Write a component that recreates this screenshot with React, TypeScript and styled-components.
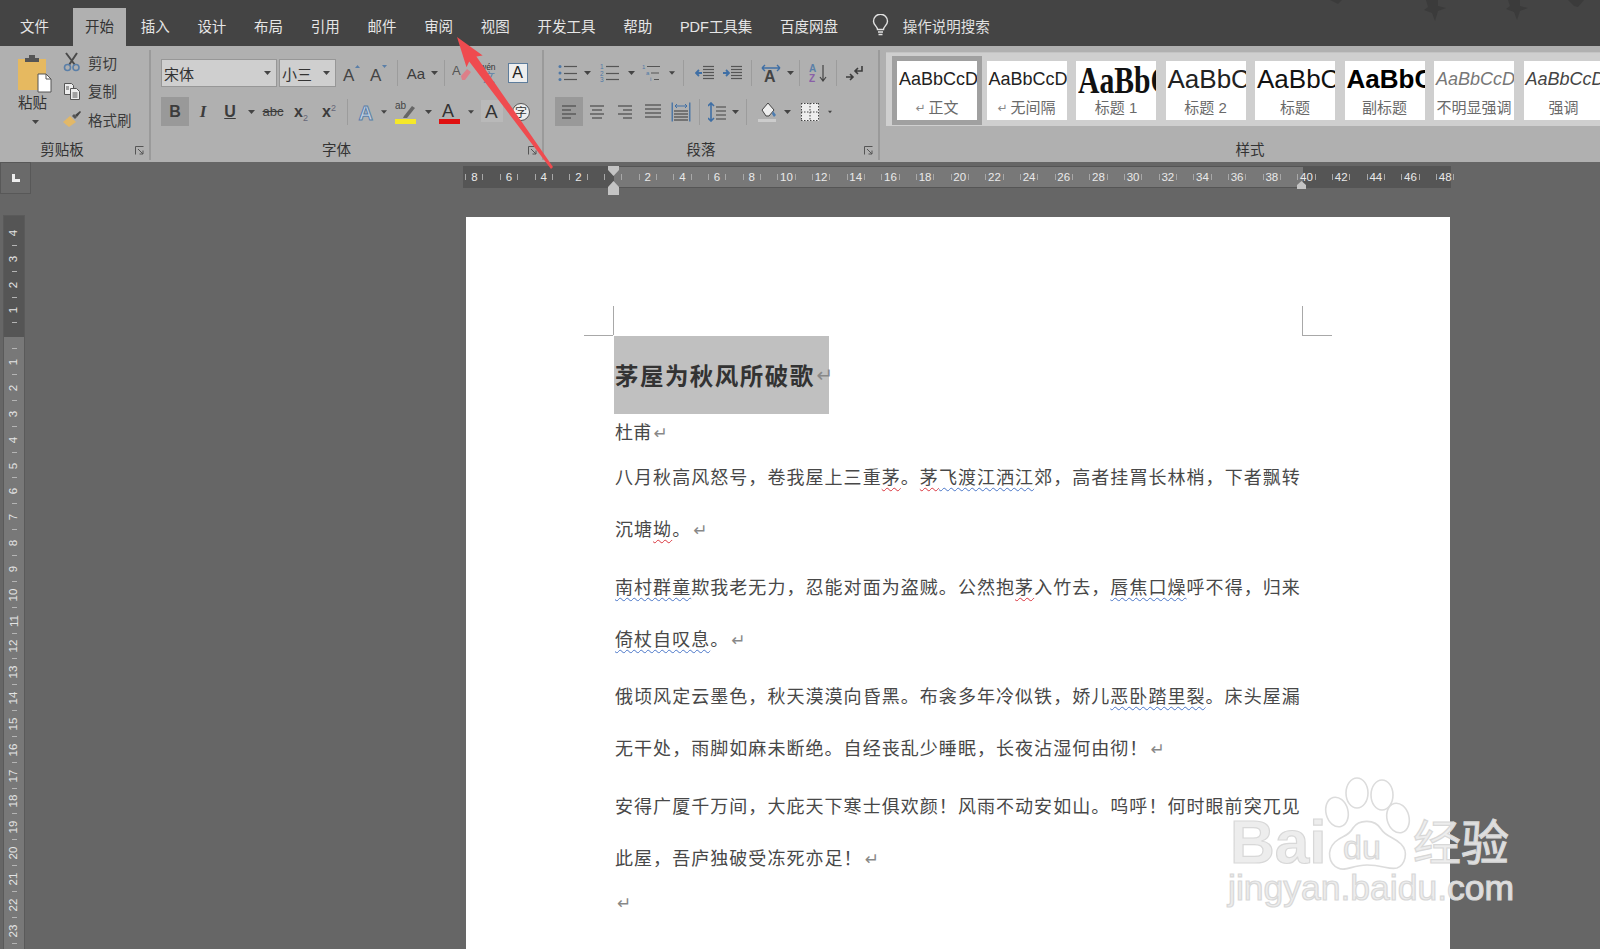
import React from "react";
import styled, { createGlobalStyle } from "styled-components";

const Global = createGlobalStyle`
  html, body { margin: 0; padding: 0; background: #666; }
  body { width: 1600px; height: 949px; overflow: hidden; font-family: "Noto Sans CJK SC", "Liberation Sans", sans-serif; }
`;
const UI = `"Liberation Sans", "Noto Sans CJK SC", sans-serif`;

const Shell = styled.div`position: relative; width: 1600px; height: 949px; overflow: hidden; display: flex; flex-direction: column; background: #666;`;
const TitleBar = styled.div`position: relative; height: 46px; flex: none; background: #444; display: flex; align-items: flex-end; padding-left: 8px; box-sizing: border-box;`;
const Tab = styled.div<{ $active?: boolean; $after?: number }>`
  height: 38px; padding: 0 12px; margin-right: ${p => p.$after ?? 3.7}px; display: flex; align-items: center; padding-bottom: 3px; box-sizing: border-box;
  font: 14.5px ${UI}; color: ${p => p.$active ? "#333" : "#e6e6e6"}; background: ${p => p.$active ? "#b0b0b0" : "transparent"};
`;
const Search = styled.div`display: flex; align-items: center; gap: 14px; margin-left: 18px; height: 38px; padding-bottom: 3px; box-sizing: border-box; font: 14.5px ${UI}; color: #e0e0e0;`;
const Birds = styled.svg`position: absolute; right: 0; top: 0;`;

const Ribbon = styled.div`height: 116px; flex: none; background: #b0b0b0; display: flex; overflow: hidden;`;
const Group = styled.section<{ $w: number; $last?: boolean }>`
  width: ${p => p.$w}px; flex: none; box-sizing: border-box; margin: 4px 0 2px; display: flex; flex-direction: column;
  border-right: ${p => p.$last ? "none" : "2px solid #9a9a9a"};
`;
const Body = styled.div`flex: 1; min-height: 0; padding-top: 9px; box-sizing: border-box;`;
const ClipBody = styled(Body)`display: flex; padding-top: 0;`;
const PasteCol = styled.div`width: 62px; padding-top: 5px; padding-left: 18px; box-sizing: border-box; display: flex; flex-direction: column; align-items: flex-start;`;
const PasteLabel = styled.div`font: 14.5px ${UI}; color: #333; line-height: 20px;`;
const PasteCaret = styled.div`display: flex; margin: 7px 0 0 14px;`;
const SmallCol = styled.div`display: flex; flex-direction: column; margin-top: -2px;`;
const SmallItem = styled.div`height: 28.5px; display: flex; align-items: center; gap: 6px; font: 14.5px ${UI}; color: #3a3a3a;`;
const SmallIcon = styled.div`width: 20px; display: flex; justify-content: center;`;
const LabelRow = styled.div<{ $pad?: number }>`height: 20px; flex: none; margin-top: auto; display: flex; align-items: center; padding-left: ${p => p.$pad ?? 0}px;`;
const GroupLabel = styled.div`flex: 1; text-align: center; font: 14.5px ${UI}; color: #333; line-height: 20px;`;
const Launcher = styled.div<{ $w: number }>`width: ${p => p.$w}px; flex: none; display: flex; justify-content: flex-end; padding-right: 5px; box-sizing: border-box;`;

const Rows = styled.div<{ $left: number }>`display: flex; flex-direction: column; gap: 10px; padding-left: ${p => p.$left}px;`;
const Row = styled.div<{ $h: number }>`display: flex; align-items: center; height: ${p => p.$h}px;`;
const Select = styled.div<{ $w: number }>`
  width: ${p => p.$w}px; height: 28px; box-sizing: border-box; flex: none; background: #cfcfcf; border: 1px solid #979797; margin-right: 2px;
  display: flex; align-items: center; justify-content: space-between; padding: 0 5px 0 2px; font: 15px ${UI}; color: #333;
`;
const Cell = styled.div<{ $w: number; $on?: boolean }>`
  width: ${p => p.$w}px; height: 29px; flex: none; display: flex; align-items: center; justify-content: center;
  background: ${p => p.$on ? "#999" : "transparent"};
`;
const Sep = styled.div<{ $w: number }>`width: ${p => p.$w}px; height: 26px; flex: none; display: flex; justify-content: center; &::after { content: ""; width: 1px; background: #9c9c9c; }`;
const Glyph = styled.span<{ $f?: string; $s: number; $b?: boolean; $i?: boolean; $c?: string; $u?: boolean; $st?: boolean }>`
  font-family: ${p => p.$f ?? UI}; font-size: ${p => p.$s}px; font-weight: ${p => p.$b ? 700 : 400}; font-style: ${p => p.$i ? "italic" : "normal"};
  color: ${p => p.$c ?? "#3c3c3c"}; line-height: 1; text-decoration: ${p => p.$u ? "underline" : p.$st ? "line-through" : "none"};
  & sup, & sub { font-size: 9px; font-weight: 400; color: #667; line-height: 0; }
`;
const BoxA = styled.div`width: 20px; height: 20px; box-sizing: border-box; background: #eee; border: 1px solid #5e7d9c; display: flex; align-items: center; justify-content: center; font: 16px ${UI}; color: #222;`;

const Gallery = styled.div`margin: 2px 0 0 6px; height: 74px; width: 760px; flex: none; box-sizing: border-box; background: #cfcfcf; display: flex; gap: 9.5px; padding: 8px 0 0 11px; border-top: 1px solid #c4c4c4;`;
const Card = styled.div<{ $sel?: boolean }>`
  width: 80px; height: 59px; flex: none; background: #fff; display: flex; flex-direction: column; align-items: center; overflow: hidden;
  outline: ${p => p.$sel ? "5px solid #a0a0a0" : "none"};
`;
const Sample = styled.div<{ $f?: string; $s: number; $b?: boolean; $i?: boolean; $c?: string; $sx?: number }>`
  height: 37px; width: 80px; flex: none; overflow: hidden; white-space: nowrap; display: flex; align-items: center; padding-left: 2px; box-sizing: border-box;
  font-family: ${p => p.$f ?? UI}; font-size: ${p => p.$s}px; font-weight: ${p => p.$b ? 700 : 400}; font-style: ${p => p.$i ? "italic" : "normal"}; color: ${p => p.$c ?? "#222"};
  & > span { display: block; transform-origin: left center; transform: scaleX(${p => p.$sx ?? 1}); }
`;
const CardLabel = styled.div`font: 15px ${UI}; color: #6a6a6a; line-height: 20px; display: flex; align-items: center; gap: 3px; white-space: nowrap;`;

const Workspace = styled.div`flex: 1; min-height: 0; display: flex; position: relative; background: #666;`;
const LeftRail = styled.div`width: 466px; flex: none; display: flex; flex-direction: column;`;
const TabSel = styled.div`width: 31px; height: 32px; box-sizing: border-box; background: #6a6a6a; border: 1px solid #585858; display: flex; align-items: center; justify-content: center; flex: none;`;
const VRuler = styled.div`margin: 21px 0 0 2.5px; width: 22px; flex: 1; padding-top: 4px; box-sizing: border-box; overflow: hidden; background: linear-gradient(#555 0 121.5px, #787878 121.5px); border: 1px solid #5a5a5a; border-bottom: none; color: #e4e4e4; font: 400 11.5px ${UI};`;
const VCell = styled.div`height: 25.85px; position: relative; display: flex; align-items: center; justify-content: center; & > span { transform: rotate(-90deg); }
  &::after { content: ""; position: absolute; left: 8px; bottom: 0; width: 5px; height: 1px; background: #b4b4b4; }`;
const MainCol = styled.div`display: flex; flex-direction: column; width: 988px; flex: none;`;
const HRuler = styled.div`margin: 4px 0 0 -3px; width: 988px; height: 22px; flex: none; box-sizing: border-box; display: flex; overflow: visible; border: 1px solid #555;
  background: linear-gradient(90deg, #555 0 150px, #787878 150px 839px, #555 839px); color: #eaeaea; font: 400 11.5px ${UI};`;
const HTrack = styled.div`display: flex; margin-left: -7px; height: 100%;`;
const HCell = styled.div`width: 34.68px; flex: none; display: flex; align-items: center; justify-content: center;`;
const HNum = styled.span`width: 16.3px; text-align: center;`;
const HTick = styled.i`width: 1px; height: 6px; background: #a8a8a8;`;
const Page = styled.div`position: relative; margin-top: 29px; width: 984px; flex: 1; background: #fff; box-sizing: border-box; padding: 119px 148px 0 148px; font-family: "Noto Sans CJK SC", sans-serif; color: #484848;`;
const Crop = styled.i<{ $x: number; $y: number; $w: number; $h: number }>`position: absolute; left: ${p => p.$x}px; top: ${p => p.$y}px; width: ${p => p.$w}px; height: ${p => p.$h}px; background: #a8a8a8;`;
const Title = styled.div`width: 214.5px; height: 78px; background: #c0c0c0; display: flex; align-items: center; padding-left: 1px; box-sizing: border-box; font-size: 23.5px; font-weight: 700; letter-spacing: 1.45px; color: #333; white-space: nowrap;`;
const Author = styled.div`height: 36px; line-height: 35px; font-size: 18px; padding-left: 1px; white-space: nowrap; letter-spacing: .3px;`;
const Para = styled.p`margin: 0 0 5.5px; font-size: 18px; line-height: 52px; letter-spacing: 1.05px; padding-left: 1px; width: 692px; white-space: normal;`;
const LastLine = styled.div`height: 26px; line-height: 26px; padding-left: 1px; font-size: 18px;`;
const Ret = styled.span<{ $s?: number }>`font-family: "DejaVu Sans", sans-serif; font-size: ${p => p.$s ?? 17}px; line-height: 1; font-weight: 400; color: #888; letter-spacing: 0; margin-left: 2px;`;
const CardRet = styled(Ret)`font-size: 12px; margin: 0;`;
const Wavy = styled.span<{ $c: string }>`text-decoration: underline wavy ${p => p.$c} 1px; text-underline-offset: 3px;`;

const Overlay = styled.svg`position: absolute; left: 0; top: 0; pointer-events: none;`;
const Mark = styled.div`position: absolute; left: 1226px; top: 775px; width: 300px; height: 150px; pointer-events: none;`;
const MarkPaw = styled.svg`position: absolute; left: 0; top: 0;`;
const MarkText = styled.span<{ $x: number; $y: number; $s: number; $b?: boolean }>`
  position: absolute; left: ${p => p.$x}px; top: ${p => p.$y}px; font-family: "Liberation Sans", "Noto Sans CJK SC", sans-serif; font-size: ${p => p.$s}px; line-height: 1; white-space: nowrap;
  color: rgba(236,236,236,.92); -webkit-text-stroke: 1.2px #d8d8d8; font-weight: ${p => p.$b ? 700 : 400};
`;

const Caret = ({ c = "#444" }: { c?: string }) => <svg width="7" height="4" viewBox="0 0 7 4"><path d="M0 0h7L3.5 4z" fill={c} /></svg>;

const Paste = () => (
  <svg width="35" height="38" viewBox="0 0 35 38">
    <rect x="0" y="4" width="28" height="31" fill="#e6b960" />
    <rect x="7" y="3" width="14" height="4" fill="#555" />
    <rect x="11" y="0" width="6" height="4" fill="#555" />
    <path d="M20 19h8l5 5v13H20z" fill="#fff" stroke="#555" />
    <path d="M28 19v5h5" fill="none" stroke="#555" />
  </svg>
);
const Scissors = () => (
  <svg width="18" height="20" viewBox="0 0 18 20" fill="none">
    <path d="M3 1l9 12M14 1L6 13" stroke="#4a4a4a" strokeWidth="2" />
    <circle cx="4.500" cy="15.500" r="3" stroke="#5a7fa8" strokeWidth="1.600" />
    <circle cx="13" cy="15.500" r="3" stroke="#5a7fa8" strokeWidth="1.600" />
  </svg>
);
const Copy = () => (
  <svg width="18" height="18" viewBox="0 0 18 18" fill="#eee" stroke="#555">
    <path d="M1.500 1.500h7l2 2v9h-9z" />
    <path d="M7.500 6.500h6l3 3v8h-9z" />
    <path d="M9.500 11h5M9.500 13h5M9.500 15h5M3 5h3M3 7h3" fill="none" />
  </svg>
);
const Brush = () => (
  <svg width="20" height="18" viewBox="0 0 20 18">
    <path d="M1 12l7-6 6 6-7 5z" fill="#e2b868" />
    <path d="M10 6l2-2 3 3-2 2z" fill="#555" />
    <path d="M13 5l5-4 1 1-4 5z" fill="#444" />
  </svg>
);
const LauncherIcon = () => (
  <svg width="9" height="9" viewBox="0 0 9 9" fill="none" stroke="#555">
    <path d="M.5 8.500v-8h8" /><path d="M3 3l5 5M8 4.500V8H4.500" />
  </svg>
);
const Bulb = () => (
  <svg width="17" height="23" viewBox="0 0 17 23" fill="none" stroke="#e2e2e2" strokeWidth="1.400">
    <path d="M5.500 15.500c0-3-4-4.500-4-8.300a7 7 0 0 1 14 0c0 3.800-4 5.300-4 8.300z" />
    <path d="M6 18h5M6.500 20.500h4" />
  </svg>
);
const GrowA = ({ up }: { up: boolean }) => (
  <svg width="20" height="18" viewBox="0 0 20 18">
    <text x="1" y="17" fontFamily="Liberation Sans" fontSize="17" fill="#444">A</text>
    <path d={up ? "M13 4l2.500-3 2.500 3z" : "M13 1h5l-2.500 3z"} fill="#5a7fa8" />
  </svg>
);
const Eraser = () => (
  <svg width="20" height="20" viewBox="0 0 20 20">
    <text x="0" y="12" fontFamily="Liberation Sans" fontSize="13" fill="#555">A</text>
    <path d="M9 13l6-7 4 3-6 8H10z" fill="#dd7f88" />
  </svg>
);
const Wen = () => (
  <svg width="20" height="21" viewBox="0 0 20 21">
    <text x="1" y="7" fontFamily="Liberation Sans" fontSize="8.500" fill="#333">wén</text>
    <text x="4" y="19" fontFamily="Noto Sans CJK SC" fontSize="12" fill="#5a7fa8">文</text>
  </svg>
);
const ColorA = ({ c }: { c: string }) => (
  <svg width="22" height="24" viewBox="0 0 22 24">
    <text x="3" y="17" fontFamily="Liberation Sans" fontSize="18" fill="#333">A</text>
    <rect x="0" y="19" width="21" height="5" fill={c} />
  </svg>
);
const Highlight = () => (
  <svg width="22" height="24" viewBox="0 0 22 24">
    <text x="0" y="9" fontFamily="Liberation Sans" fontSize="10" fill="#444">ab</text>
    <path d="M9 16l8-10 3 2-8 10H8z" fill="#666" />
    <rect x="0" y="19" width="21" height="5" fill="#f5e829" />
  </svg>
);
const EffectA = () => (
  <svg width="20" height="22" viewBox="0 0 20 22">
    <text x="2.500" y="19" fontFamily="Liberation Sans" fontSize="20" fontWeight="700" fill="#c3d2e4" stroke="#5a7fa8" strokeWidth="1">A</text>
  </svg>
);
const ShadedA = () => <svg width="22" height="24" viewBox="0 0 22 24"><rect width="22" height="22" fill="#b9b9b9" /><text x="4" y="18" fontFamily="Liberation Sans" fontSize="19" fill="#333">A</text></svg>;
const Phon = () => (
  <svg width="20" height="20" viewBox="0 0 20 20">
    <circle cx="10" cy="10" r="8.500" fill="#eee" stroke="#555" />
    <text x="4" y="15" fontFamily="Noto Sans CJK SC" fontSize="12" fill="#333">字</text>
  </svg>
);
const lines = (x: number, x2: number, ys: number[], c = "#555") => ys.map(y => <path key={y} d={`M${x} ${y}H${x2}`} stroke={c} strokeWidth="1.200" />);
const Bullets = () => (
  <svg width="20" height="18" viewBox="0 0 20 18">
    {[2.5, 9, 15.5].map(y => <circle key={y} cx="2" cy={y} r="1.500" fill="#4f78a6" />)}
    {lines(6, 19, [2.5, 9.5, 15.5])}
  </svg>
);
const Numbers = () => (
  <svg width="20" height="18" viewBox="0 0 20 18">
    {["1", "2", "3"].map((t, i) => <text key={t} x="0" y={5 + i * 6.5} fontFamily="Liberation Sans" fontSize="6.500" fill="#4f78a6">{t}</text>)}
    {lines(6, 19, [2.5, 9.5, 15.5])}
  </svg>
);
const Multi = () => (
  <svg width="20" height="18" viewBox="0 0 20 18">
    <text x="0" y="5" fontFamily="Liberation Sans" fontSize="6" fill="#4f78a6">1</text>
    <text x="4" y="11" fontFamily="Liberation Sans" fontSize="6" fill="#4f78a6">a</text>
    <text x="8" y="17" fontFamily="Liberation Sans" fontSize="6" fill="#4f78a6">i</text>
    <path d="M5 2.500h13M9 9h8M12 15.500h5" stroke="#555" strokeWidth="1.200" />
  </svg>
);
const Indent = ({ rev }: { rev?: boolean }) => (
  <svg width="20" height="16" viewBox="0 0 20 16">
    {lines(8, 19, [1.5, 4.5, 7.5, 10.5, 13.5])}
    <path d={rev ? "M0 8h5M3 5l3 3-3 3" : "M7 8H2M4 5L1 8l3 3"} stroke="#3f6fa5" strokeWidth="1.800" fill="none" />
  </svg>
);
const TextDir = () => (
  <svg width="20" height="18" viewBox="0 0 20 18">
    <text x="3" y="18" fontFamily="Liberation Sans" fontWeight="700" fontSize="16" fill="#444">A</text>
    <path d="M1 4h18M1 4l3-3M1 4l3 3M19 4l-3-3M19 4l-3 3" stroke="#3f6fa5" strokeWidth="1.400" fill="none" />
  </svg>
);
const Sort = () => (
  <svg width="20" height="20" viewBox="0 0 20 20">
    <text x="0" y="9" fontFamily="Liberation Sans" fontSize="10" fontWeight="700" fill="#5a7fa8">A</text>
    <text x="0" y="19" fontFamily="Liberation Sans" fontSize="10" fontWeight="700" fill="#8a5fa8">Z</text>
    <path d="M14 2v15M11 14l3 4 3-4" stroke="#444" fill="none" strokeWidth="1.200" />
  </svg>
);
const Marks = () => (
  <svg width="18" height="16" viewBox="0 0 18 16" fill="none" stroke="#3c3c3c" strokeWidth="1.600">
    <path d="M17 1v5h-6M13 3l-3 3 3 3M1 12h6M5 9l3 3-3 3" />
  </svg>
);
const Align = ({ ys }: { ys: [number, number][] }) => (
  <svg width="16" height="14" viewBox="0 0 16 14">
    {ys.map(([a, b], i) => <path key={i} d={`M${a} ${i * 4 + 1}H${b}`} stroke="#4a4a4a" strokeWidth="1.200" />)}
  </svg>
);
const Justify = () => <svg width="18" height="15" viewBox="0 0 18 15">{lines(1, 17, [1, 5, 9, 13], "#4a4a4a")}</svg>;
const Distribute = () => (
  <svg width="20" height="20" viewBox="0 0 20 20">
    <rect x=".5" y=".5" width="1.500" height="19" fill="#4f78a6" />
    <rect x="18" y=".5" width="1.500" height="19" fill="#4f78a6" />
    <path d="M4 4h12M4 4l2-2M4 4l2 2M16 4l-2-2M16 4l-2 2" stroke="#3f6fa5" fill="none" />
    {lines(3, 17, [9, 12, 15, 18], "#4a4a4a")}
  </svg>
);
const LineSp = () => (
  <svg width="18" height="20" viewBox="0 0 18 20">
    <path d="M3 1v18M0 4l3-3 3 3M0 16l3 3 3-3" stroke="#3f6fa5" strokeWidth="1.600" fill="none" />
    {lines(8, 18, [5, 9, 13, 17])}
  </svg>
);
const Fill = () => (
  <svg width="20" height="22" viewBox="0 0 20 22">
    <path d="M4 9l6-7 6 7-5 6H8z" fill="#eee" stroke="#444" />
    <path d="M15 10l3 4-2 2-2-3z" fill="#4c7cb0" />
    <rect x="0" y="18" width="18" height="3" fill="#ccc" />
  </svg>
);
const Border = () => (
  <svg width="18" height="18" viewBox="0 0 18 18">
    <rect width="18" height="18" fill="#eee" />
    <path d="M0 .5h18M.5 0v18M0 17.500h18M17.500 0v18M9 0v18M0 9h18" stroke="#444" strokeDasharray="1.500 1.500" />
  </svg>
);

const tabs = ["插入", "设计", "布局", "引用", "邮件", "审阅", "视图", "开发工具", "帮助", "PDF工具集", "百度网盘"];
const hNums = [8, 6, 4, 2, 0, 2, 4, 6, 8, 10, 12, 14, 16, 18, 20, 22, 24, 26, 28, 30, 32, 34, 36, 38, 40, 42, 44, 46, 48];
const vNums = [4, 3, 2, 1, 0, ...Array.from({ length: 23 }, (_, i) => i + 1)];
const RED = "#d9363e";
const BLUE = "#4a76c8";

export default function App() {
  return (
    <Shell>
      <Global />
      <TitleBar>
        <Tab $after={12}>文件</Tab>
        <Tab $active $after={2.7}>开始</Tab>
        {tabs.map(t => <Tab key={t}>{t}</Tab>)}
        <Search><Bulb />操作说明搜索</Search>
        <Birds width="270" height="24" viewBox="0 0 270 24" fill="#3b3b3b">
          <path d="M0 0h12l-4 4zM96 0h12v6l8 2-8 3-3 10-3-8-8-3 4-3zM178 0h12v6l8 2-8 3-3 9-3-8-8-3 4-3zM238 0h16l-6 7-4-1z" />
        </Birds>
      </TitleBar>

      <Ribbon>
        <Group $w={151}>
          <ClipBody>
            <PasteCol>
              <Paste />
              <PasteLabel>粘贴</PasteLabel>
              <PasteCaret><Caret /></PasteCaret>
            </PasteCol>
            <SmallCol>
              <SmallItem><SmallIcon><Scissors /></SmallIcon>剪切</SmallItem>
              <SmallItem><SmallIcon><Copy /></SmallIcon>复制</SmallItem>
              <SmallItem><SmallIcon><Brush /></SmallIcon>格式刷</SmallItem>
            </SmallCol>
          </ClipBody>
          <LabelRow><GroupLabel>剪贴板</GroupLabel><Launcher $w={25}><LauncherIcon /></Launcher></LabelRow>
        </Group>

        <Group $w={393}>
          <Body>
            <Rows $left={10}>
              <Row $h={28}>
                <Select $w={116}>宋体<Caret /></Select>
                <Select $w={57}>小三<Caret /></Select>
                <Cell $w={27}><GrowA up /></Cell>
                <Cell $w={27}><GrowA up={false} /></Cell>
                <Sep $w={11} />
                <Cell $w={26}><Glyph $s={15}>Aa</Glyph></Cell>
                <Cell $w={10}><Caret /></Cell>
                <Sep $w={10} />
                <Cell $w={26}><Eraser /></Cell>
                <Cell $w={27}><Wen /></Cell>
                <Cell $w={31}><BoxA>A</BoxA></Cell>
              </Row>
              <Row $h={29}>
                <Cell $w={28} $on><Glyph $s={16} $b>B</Glyph></Cell>
                <Cell $w={28}><Glyph $f='"Liberation Serif", serif' $s={17} $b $i>I</Glyph></Cell>
                <Cell $w={26}><Glyph $s={16} $b $u>U</Glyph></Cell>
                <Cell $w={16}><Caret /></Cell>
                <Cell $w={28}><Glyph $s={13} $st>abc</Glyph></Cell>
                <Cell $w={28}><Glyph $s={16} $b>x<sub>2</sub></Glyph></Cell>
                <Cell $w={28}><Glyph $s={16} $b>x<sup>2</sup></Glyph></Cell>
                <Sep $w={8} />
                <Cell $w={30}><EffectA /></Cell>
                <Cell $w={6}><Caret /></Cell>
                <Cell $w={37}><Highlight /></Cell>
                <Cell $w={8}><Caret /></Cell>
                <Cell $w={36}><ColorA c="#e01010" /></Cell>
                <Cell $w={6}><Caret /></Cell>
                <Cell $w={36}><ShadedA /></Cell>
                <Cell $w={22}><Phon /></Cell>
              </Row>
            </Rows>
          </Body>
          <LabelRow><GroupLabel>字体</GroupLabel><Launcher $w={20}><LauncherIcon /></Launcher></LabelRow>
        </Group>

        <Group $w={336}>
          <Body>
            <Rows $left={11}>
              <Row $h={28}>
                <Cell $w={26}><Bullets /></Cell>
                <Cell $w={12}><Caret /></Cell>
                <Cell $w={34}><Numbers /></Cell>
                <Cell $w={8}><Caret /></Cell>
                <Cell $w={34}><Multi /></Cell>
                <Cell $w={6}><Caret /></Cell>
                <Sep $w={17} />
                <Cell $w={26}><Indent /></Cell>
                <Cell $w={30}><Indent rev /></Cell>
                <Sep $w={6} />
                <Cell $w={33}><TextDir /></Cell>
                <Cell $w={7}><Caret /></Cell>
                <Sep $w={10} />
                <Cell $w={30}><Sort /></Cell>
                <Sep $w={5} />
                <Cell $w={30}><Marks /></Cell>
              </Row>
              <Row $h={29}>
                <Cell $w={28} $on><Align ys={[[1, 15], [1, 10], [1, 15], [1, 10]]} /></Cell>
                <Cell $w={28}><Align ys={[[1, 15], [3, 13], [1, 15], [3, 13]]} /></Cell>
                <Cell $w={28}><Align ys={[[1, 15], [6, 15], [1, 15], [6, 15]]} /></Cell>
                <Cell $w={28}><Justify /></Cell>
                <Cell $w={28}><Distribute /></Cell>
                <Sep $w={8} />
                <Cell $w={28}><LineSp /></Cell>
                <Cell $w={8}><Caret /></Cell>
                <Sep $w={15} />
                <Cell $w={28}><Fill /></Cell>
                <Cell $w={10}><Caret /></Cell>
                <Cell $w={36}><Border /></Cell>
                <Cell $w={4}><Caret /></Cell>
              </Row>
            </Rows>
          </Body>
          <LabelRow><GroupLabel>段落</GroupLabel><Launcher $w={20}><LauncherIcon /></Launcher></LabelRow>
        </Group>

        <Group $w={720} $last>
          <Gallery>
            <Card $sel><Sample $s={18}><span>AaBbCcDc</span></Sample><CardLabel><CardRet>↵</CardRet>正文</CardLabel></Card>
            <Card><Sample $s={18}><span>AaBbCcDc</span></Sample><CardLabel><CardRet>↵</CardRet>无间隔</CardLabel></Card>
            <Card><Sample $f='"Liberation Serif", serif' $s={38} $c="#111" $b $sx={0.78}><span>AaBbC</span></Sample><CardLabel>标题 1</CardLabel></Card>
            <Card><Sample $s={26}><span>AaBbC</span></Sample><CardLabel>标题 2</CardLabel></Card>
            <Card><Sample $s={26} $c="#111"><span>AaBbC</span></Sample><CardLabel>标题</CardLabel></Card>
            <Card><Sample $s={26} $b $c="#000"><span>AaBbC</span></Sample><CardLabel>副标题</CardLabel></Card>
            <Card><Sample $s={18} $i $c="#777"><span>AaBbCcDc</span></Sample><CardLabel>不明显强调</CardLabel></Card>
            <Card><Sample $s={18} $i $c="#444"><span>AaBbCcDc</span></Sample><CardLabel>强调</CardLabel></Card>
          </Gallery>
          <LabelRow $pad={20}><GroupLabel>样式</GroupLabel></LabelRow>
        </Group>
      </Ribbon>

      <Workspace>
        <LeftRail>
          <TabSel><svg width="10" height="10" viewBox="0 0 10 10"><path d="M1 1h3v5h5v3H1z" fill="#eee" /></svg></TabSel>
          <VRuler>
            {vNums.map((n, i) => <VCell key={i}><span>{n === 0 ? "" : n}</span></VCell>)}
          </VRuler>
        </LeftRail>
        <MainCol>
          <HRuler>
            <HTrack>
              {hNums.map((n, i) => <HCell key={i}><HTick /><HNum>{n === 0 ? "" : n}</HNum><HTick /></HCell>)}
            </HTrack>
          </HRuler>
          <Page>
            <Crop $x={147} $y={89} $w={1} $h={29} />
            <Crop $x={118} $y={118} $w={29} $h={1} />
            <Crop $x={836} $y={89} $w={1} $h={29} />
            <Crop $x={836} $y={118} $w={30} $h={1} />
            <Title>茅屋为秋风所破歌<Ret $s={20}>↵</Ret></Title>
            <Author>杜甫<Ret>↵</Ret></Author>
            <Para>八月秋高风怒号，卷我屋上三重<Wavy $c={RED}>茅</Wavy>。<Wavy $c={RED}>茅</Wavy><Wavy $c={BLUE}>飞渡江洒江</Wavy>郊，高者挂罥长林梢，下者飘转沉塘<Wavy $c={RED}>坳</Wavy>。<Ret>↵</Ret></Para>
            <Para><Wavy $c={BLUE}>南村群童</Wavy>欺我老无力，忍能对面为盗贼。公然抱<Wavy $c={RED}>茅</Wavy>入竹去，<Wavy $c={BLUE}>唇焦口燥</Wavy>呼不得，归来<Wavy $c={BLUE}>倚杖自叹息</Wavy>。<Ret>↵</Ret></Para>
            <Para>俄顷风定云墨色，秋天漠漠向昏黑。布衾多年冷似铁，娇儿<Wavy $c={BLUE}>恶卧踏里裂</Wavy>。床头屋漏无干处，雨脚如麻未断绝。自经丧乱少睡眠，长夜沾湿何由彻！<Ret>↵</Ret></Para>
            <Para>安得广厦千万间，大庇天下寒士俱欢颜！风雨不动安如山。呜呼！何时眼前突兀见此屋，吾庐独破受冻死亦足！<Ret>↵</Ret></Para>
            <LastLine><Ret>↵</Ret></LastLine>
          </Page>
        </MainCol>
      </Workspace>

      <Overlay width="1600" height="949" viewBox="0 0 1600 949">
        <path d="M608 166h11v4l-5.500 6-5.500-6z" fill="#c4c4c4" />
        <path d="M613.500 181l5.500 6v3h-11v-3z" fill="#c4c4c4" />
        <rect x="608" y="190" width="11" height="5" fill="#c4c4c4" />
        <path d="M1301.500 181l4.500 4v4h-9v-4z" fill="#c4c4c4" />
        <path d="M457 37l25.700 18.400-6.300 1L553 167 551 169 469.200 61.500l-2.700 5.700z" fill="#ef4b4f" />
      </Overlay>

      <Mark>
        <MarkPaw width="300" height="110" viewBox="0 0 300 110" fill="rgba(255,255,255,.5)" stroke="#dcdcdc" strokeWidth="1.600">
          <ellipse cx="131" cy="18" rx="11" ry="15" />
          <ellipse cx="156" cy="20" rx="11" ry="15" />
          <ellipse cx="111" cy="37" rx="11" ry="15" transform="rotate(-15 111 37)" />
          <ellipse cx="172" cy="43" rx="11" ry="15" transform="rotate(-15 172 43)" />
          <path d="M112 93c-9-4-12-17-3-26 8-7 13-5 18-14 6-9 22-9 28 1 5 8 13 8 20 15 8 8 4 21-4 24-8 2-14-3-30-3-15 0-21 7-29 3z" />
        </MarkPaw>
        <MarkText $x={4} $y={36} $s={62} $b>Bai</MarkText>
        <MarkText $x={117} $y={55} $s={34}>du</MarkText>
        <MarkText $x={187} $y={45} $s={48}>经验</MarkText>
        <MarkText $x={2} $y={96} $s={35.5}>jingyan.baidu.com</MarkText>
      </Mark>
    </Shell>
  );
}
